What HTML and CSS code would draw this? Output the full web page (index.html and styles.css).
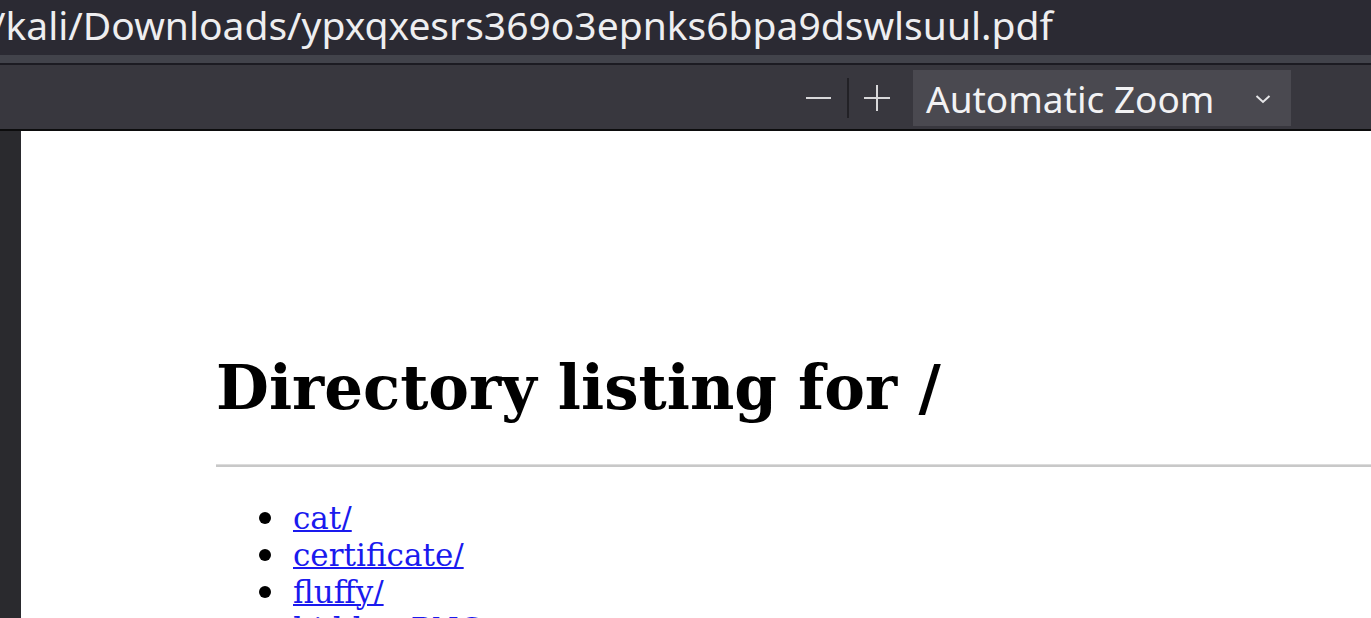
FILE: index.html
```html
<!DOCTYPE html>
<html>
<head>
<meta charset="utf-8">
<link rel="stylesheet" href="styles.css">
</head>
<body>
<div class="titlebar"><span class="path">/kali/Downloads/ypxqxesrs369o3epnks6bpa9dswlsuul.pdf</span></div>
<div class="strip"></div>
<div class="toolbar">
  <div class="zoomctl">
    <button class="btn minus" aria-label="Zoom out"><svg width="26" height="4" viewBox="0 0 26 4"><rect x="0" y="1" width="25" height="2" fill="#d8d8da"/></svg></button>
    <span class="sep"></span>
    <button class="btn plus" aria-label="Zoom in"><svg width="27" height="27" viewBox="0 0 27 27"><rect x="0" y="12" width="26" height="2" fill="#d8d8da"/><rect x="12" y="0" width="2" height="26" fill="#d8d8da"/></svg></button>
    <div class="select"><span>Automatic Zoom</span><svg class="chev" width="16" height="10" viewBox="0 0 16 10"><path d="M1.5 2 L8 8 L14.5 2" fill="none" stroke="#e6e6e8" stroke-width="2"/></svg></div>
  </div>
</div>
<div class="viewer">
  <div class="sidebar"></div>
  <div class="page">
    <h1 class="title">Directory listing for /</h1>
    <hr class="rule">
    <ul class="listing">
      <li><a href="#">cat/</a></li>
      <li><a href="#">certificate/</a></li>
      <li><a href="#">fluffy/</a></li>
      <li><a href="#">hidden.PNG</a></li>
    </ul>
  </div>
</div>
</body>
</html>
```

FILE: styles.css
```css
html, body {
  margin: 0;
  padding: 0;
  height: 618px;
  overflow: hidden;
  background: #2a2a2e;
}
.titlebar {
  height: 55px;
  background: #2b2a33;
  color: #eeeef0;
  font-family: "Noto Sans", sans-serif;
  font-size: 39px;
  line-height: 50px;
  white-space: nowrap;
  overflow: hidden;
  text-indent: -9px;
}
.strip {
  height: 8px;
  background: #42434b;
  border-bottom: 2px solid #1c1b22;
}
.toolbar {
  height: 64px;
  background: #38373e;
  border-bottom: 2px solid #0c0c0d;
  display: flex;
  justify-content: flex-end;
  align-items: center;
  padding-right: 80px;
}
.zoomctl {
  display: flex;
  align-items: center;
  height: 56px;
  margin-top: 2px;
}
.btn {
  background: none;
  border: 0;
  padding: 0;
  display: flex;
  align-items: center;
}
.minus { margin-right: 15px; margin-left: 3px; }
.sep {
  width: 2px;
  height: 40px;
  background: #222126;
  margin-right: 15px;
}
.plus { margin-right: 22px; }
.select {
  width: 378px;
  height: 56px;
  background: #4a4950;
  color: #f2f2f4;
  font-family: "Noto Sans", sans-serif;
  font-size: 37px;
  display: flex;
  align-items: center;
  justify-content: space-between;
  padding: 0 20px 0 13px;
  box-sizing: border-box;
}
.chev { margin-top: 2px; }
.viewer {
  display: flex;
  height: 487px;
}
.sidebar {
  width: 21px;
  background: #2a2a2e;
  flex-shrink: 0;
}
.page {
  flex: 1;
  background: #ffffff;
  padding: 222px 0 0 195px;
  font-family: "DejaVu Serif", serif;
  overflow: hidden;
}
.title {
  margin: 0;
  font-size: 61px;
  font-weight: bold;
  line-height: 70px;
  color: #000;
}
.rule {
  margin: 41px 0 0 0;
  border: 0;
  height: 2px;
  background: #c8c8c8;
  border-top: 1px solid #dcdcdc;
}
.listing {
  margin: 33px 0 0 0;
  padding-left: 77px;
  font-size: 31px;
  line-height: 37px;
}
.listing li {
  list-style: none;
  display: flex;
}
.listing li::before {
  content: "";
  width: 12px;
  height: 12px;
  border-radius: 50%;
  background: #000;
  margin: 12px 22px 0 -34px;
  flex-shrink: 0;
}
.listing a {
  color: #1a1aee;
  text-decoration: underline;
  text-decoration-thickness: 2px;
}
```
